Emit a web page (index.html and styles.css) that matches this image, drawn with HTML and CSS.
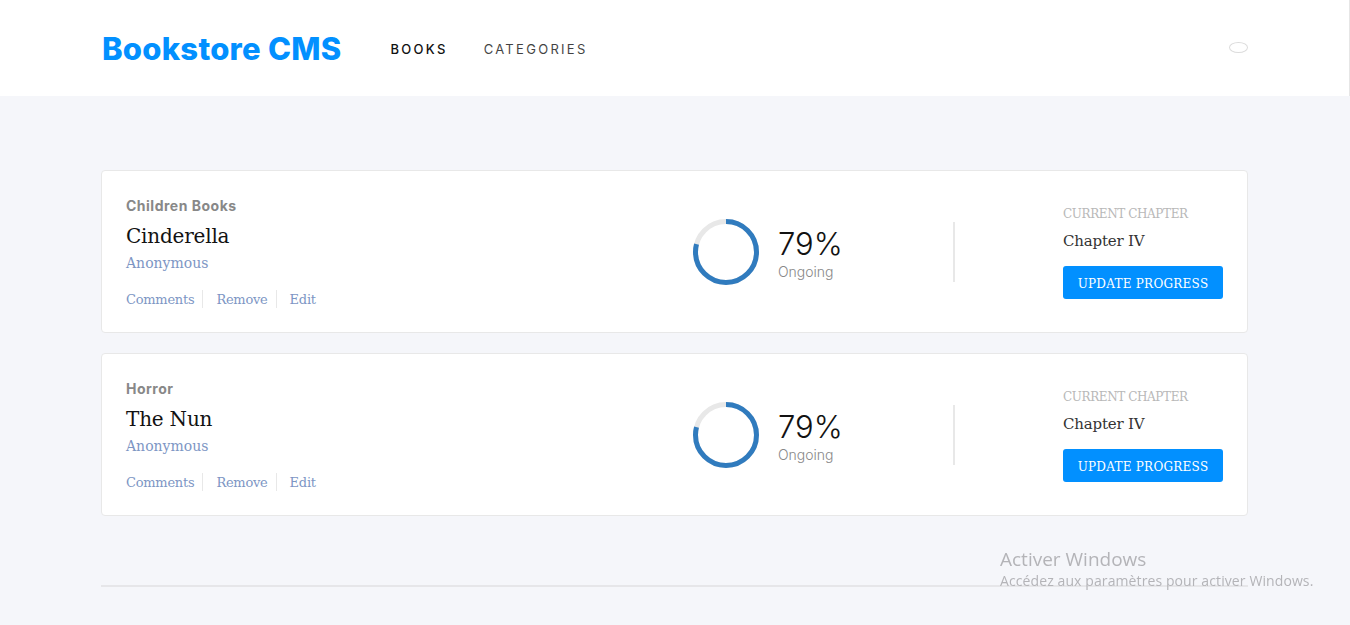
FILE: index.html
```html
<!DOCTYPE html>
<html lang="en">
<head>
<meta charset="utf-8">
<title>Bookstore CMS</title>
<link rel="stylesheet" href="styles.css">
</head>
<body>
<header class="header">
  <div class="wrap header-inner">
    <h1 class="logo">Bookstore CMS</h1>
    <nav class="nav">
      <a class="nav-link active" href="#">BOOKS</a>
      <a class="nav-link" href="#">CATEGORIES</a>
    </nav>
    <span class="user-icon"></span>
  </div>
</header>
<main class="wrap main">
  <ul class="book-list">
    <li class="card">
      <div class="book-info">
        <p class="category">Children Books</p>
        <h2 class="title">Cinderella</h2>
        <p class="author">Anonymous</p>
        <div class="actions">
          <a href="#">Comments</a>
          <span class="sep"></span>
          <a href="#">Remove</a>
          <span class="sep"></span>
          <a href="#">Edit</a>
        </div>
      </div>
      <div class="progress">
        <svg class="ring" width="68" height="68" viewBox="0 0 68 68">
          <circle cx="34" cy="34" r="30.5" fill="none" stroke="#e8e8e8" stroke-width="5"/>
          <circle cx="34" cy="34" r="30.5" fill="none" stroke="#307bbe" stroke-width="5" stroke-dasharray="151.4 191.6" transform="rotate(-90 34 34)"/>
        </svg>
        <div class="pct">
          <p class="pct-value">79%</p>
          <p class="pct-label">Ongoing</p>
        </div>
      </div>
      <div class="divider"></div>
      <div class="chapter">
        <p class="chapter-label">CURRENT CHAPTER</p>
        <p class="chapter-name">Chapter IV</p>
        <button class="update-btn">UPDATE PROGRESS</button>
      </div>
    </li>
    <li class="card">
      <div class="book-info">
        <p class="category">Horror</p>
        <h2 class="title">The Nun</h2>
        <p class="author">Anonymous</p>
        <div class="actions">
          <a href="#">Comments</a>
          <span class="sep"></span>
          <a href="#">Remove</a>
          <span class="sep"></span>
          <a href="#">Edit</a>
        </div>
      </div>
      <div class="progress">
        <svg class="ring" width="68" height="68" viewBox="0 0 68 68">
          <circle cx="34" cy="34" r="30.5" fill="none" stroke="#e8e8e8" stroke-width="5"/>
          <circle cx="34" cy="34" r="30.5" fill="none" stroke="#307bbe" stroke-width="5" stroke-dasharray="151.4 191.6" transform="rotate(-90 34 34)"/>
        </svg>
        <div class="pct">
          <p class="pct-value">79%</p>
          <p class="pct-label">Ongoing</p>
        </div>
      </div>
      <div class="divider"></div>
      <div class="chapter">
        <p class="chapter-label">CURRENT CHAPTER</p>
        <p class="chapter-name">Chapter IV</p>
        <button class="update-btn">UPDATE PROGRESS</button>
      </div>
    </li>
  </ul>
  <hr class="rule">
</main>
<div class="watermark">
  <p class="wm-title">Activer Windows</p>
  <p class="wm-sub">Accédez aux paramètres pour activer Windows.</p>
</div>
</body>
</html>
```
FILE: styles.css
```css
* { box-sizing: border-box; }
body {
  margin: 0;
  background: #f5f6fa;
  font-family: "DejaVu Serif", serif;
  color: #121212;
}
p, h1, h2, ul { margin: 0; padding: 0; }
a { text-decoration: none; }

.wrap {
  width: 1147px;
  margin-left: 101px;
}

.header {
  height: 96px;
  background: #fff;
  width: 1350px;
  border-right: 1px solid #e6e6e6;
}
.header-inner {
  height: 96px;
  display: flex;
  align-items: center;
}
.logo {
  font-family: "Inter", "Open Sans", sans-serif;
  font-weight: 800;
  font-size: 31px;
  color: #0290ff;
  letter-spacing: 0.25px;
  margin-left: 1px;
  margin-top: 0;
}
.nav {
  display: flex;
  gap: 36px;
  margin-left: 49px;
  margin-top: 2px;
}
.nav-link {
  font-family: "Inter", "Open Sans", sans-serif;
  font-size: 13px;
  letter-spacing: 2.3px;
  color: #121212;
  opacity: 0.8;
}
.nav-link.active {
  opacity: 1;
  font-weight: 500;
}
.user-icon {
  margin-left: auto;
  margin-top: -1px;
  width: 19px;
  height: 11px;
  border: 1px solid #dcdcdc;
  border-radius: 50%;
}

.main {
  padding-top: 74px;
}
.book-list {
  list-style: none;
  display: flex;
  flex-direction: column;
  gap: 20px;
}
.card {
  height: 163px;
  background: #fff;
  border: 1px solid #e8e8e8;
  border-radius: 4px;
  display: flex;
  align-items: center;
  padding: 0 24px 0 24px;
}
.book-info {
  flex: 1;
  align-self: flex-start;
  padding-top: 26px;
}
.category {
  font-family: "Inter", "Open Sans", sans-serif;
  font-weight: 700;
  font-size: 14px;
  line-height: 18px;
  letter-spacing: 0.5px;
  color: #888;
}
.title {
  font-weight: normal;
  font-size: 20px;
  line-height: 28px;
  margin-top: 7px;
  letter-spacing: -0.2px;
}
.author {
  font-size: 14px;
  line-height: 20px;
  margin-top: 3px;
  color: #7d96c4;
}
.actions {
  display: flex;
  align-items: center;
  margin-top: 16px;
  height: 20px;
}
.actions a {
  font-size: 13px;
  color: #7d96c4;
  letter-spacing: -0.25px;
}
.sep {
  width: 1px;
  height: 18px;
  background: #e8e8e8;
  margin: 0 13px 0 8px;
}

.progress {
  display: flex;
  align-items: center;
  width: 262px;
}
.ring { flex: none; }
.pct {
  margin-left: 18px;
  margin-top: 2px;
}
.pct-value {
  font-family: "Inter", "Open Sans", sans-serif;
  font-weight: 300;
  font-size: 31px;
  line-height: 38px;
  color: #121212;
}
.pct-label {
  font-family: "Inter", "Open Sans", sans-serif;
  font-weight: 300;
  font-size: 14px;
  line-height: 18px;
  color: #888;
}
.divider {
  width: 2px;
  height: 60px;
  background: #e8e8e8;
  margin-left: -1px;
}
.chapter {
  margin-left: 108px;
  width: 160px;
}
.chapter-label {
  font-size: 12px;
  line-height: 16px;
  color: #b8b8b8;
  letter-spacing: -0.4px;
  margin-top: 2px;
}
.chapter-name {
  font-size: 15px;
  line-height: 20px;
  margin-top: 9px;
  color: #333;
  letter-spacing: -0.2px;
}
.update-btn {
  display: block;
  margin-top: 15px;
  width: 160px;
  height: 33px;
  border: none;
  border-radius: 3px;
  background: #0290ff;
  color: #fff;
  font-family: "DejaVu Serif", serif;
  font-size: 12px;
  letter-spacing: 0.25px;
  padding: 3px 0 0;
}

.rule {
  margin: 69px 0 0;
  border: none;
  height: 2px;
  background: #e6e6e9;
}

.watermark {
  position: fixed;
  left: 1000px;
  top: 546px;
  font-family: "Open Sans", "Noto Sans", sans-serif;
  color: #b4b4b8;
}
.wm-title {
  font-size: 19px;
  line-height: 26px;
}
.wm-sub {
  font-size: 14px;
  line-height: 18px;
  margin-top: 0;
  letter-spacing: 0.1px;
}
```
